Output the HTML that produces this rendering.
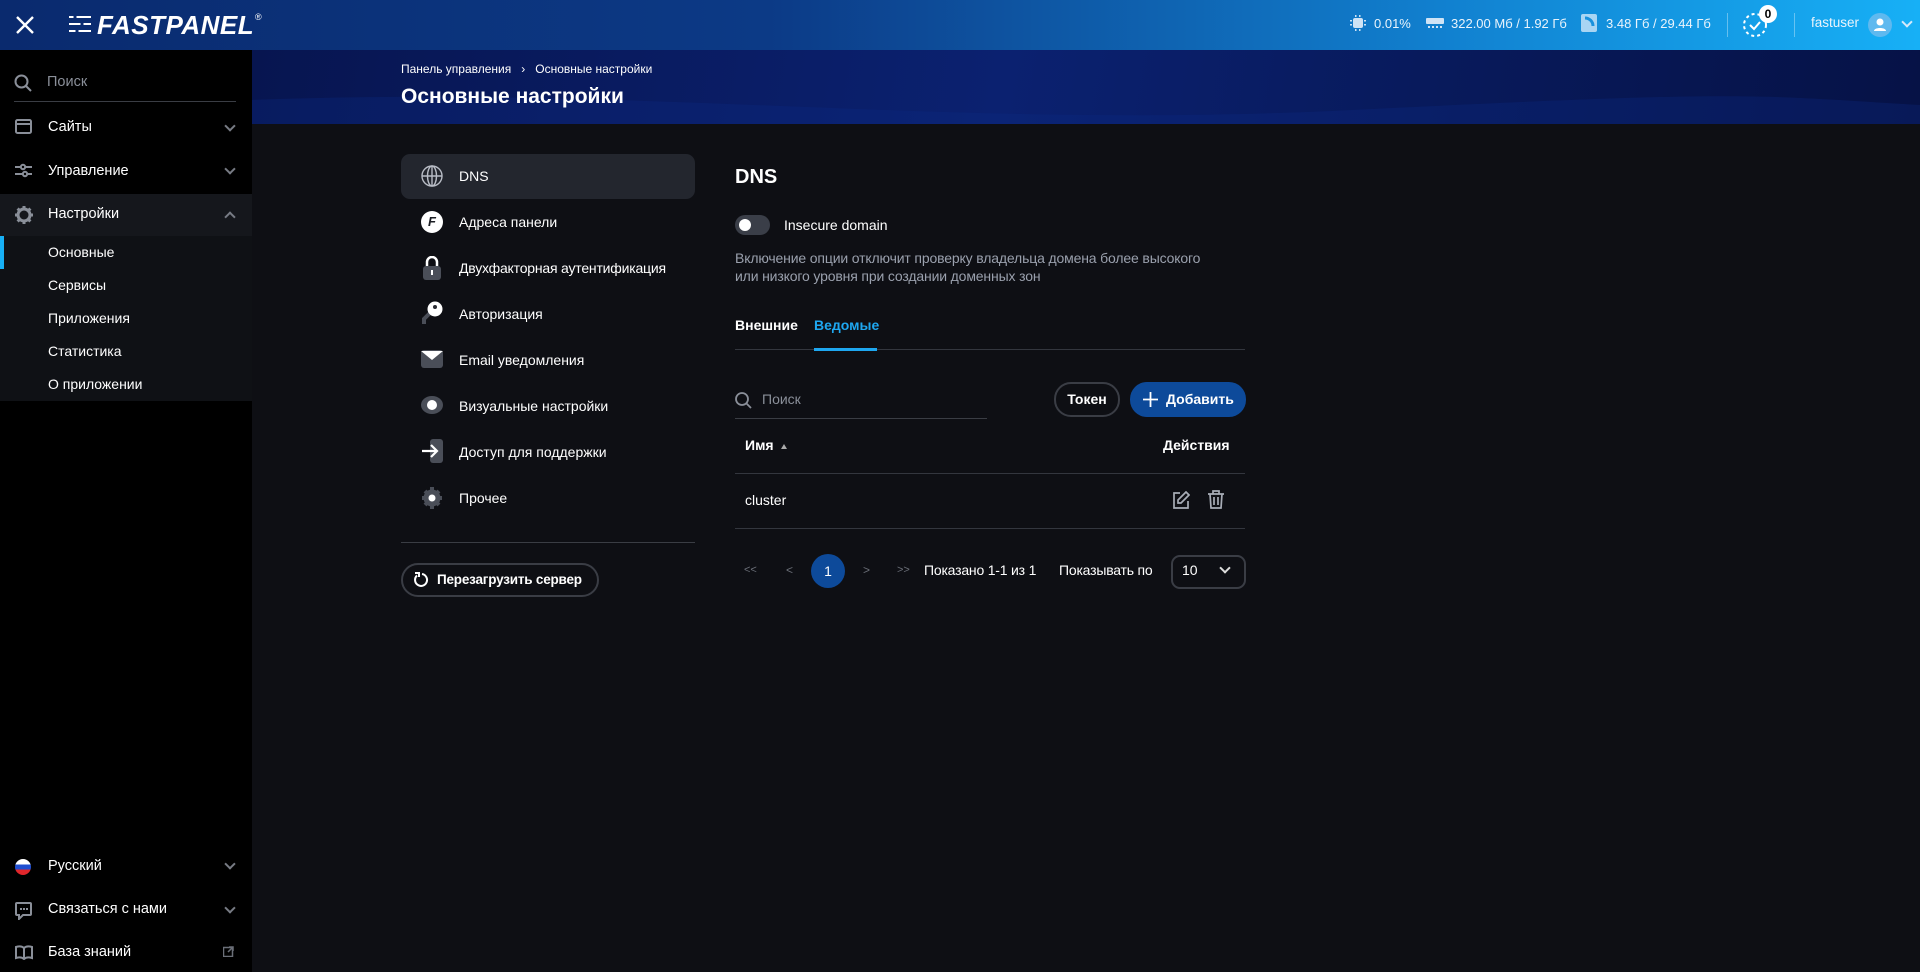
<!DOCTYPE html>
<html><head><meta charset="utf-8">
<style>
*{box-sizing:border-box;margin:0;padding:0}
body{width:1920px;height:972px;overflow:hidden;background:#0e0f14;font-family:"Liberation Sans",sans-serif;color:#fff;font-size:14.5px;position:relative}
.a{position:absolute}
.hdr{left:0;top:0;width:1920px;height:50px;background:linear-gradient(90deg,#0a2a6e 0%,#0c3a86 40%,#1180cf 75%,#17b0f6 100%)}
.ban{left:252px;top:50px;width:1668px;height:74px;background:linear-gradient(100deg,#071550 0%,#0b2170 45%,#081a5c 70%,#061246 100%);overflow:hidden}
.side{left:0;top:50px;width:252px;height:922px;background:#000}
.t{white-space:nowrap}
.muted{color:#8a8f99}
.chev{width:8px;height:8px;border-right:2px solid #777b84;border-bottom:2px solid #777b84;transform:rotate(45deg)}
.chevu{width:8px;height:8px;border-left:2px solid #777b84;border-top:2px solid #777b84;transform:rotate(45deg)}
.m{font-size:14px}
</style></head><body>
<div class="a hdr"></div>
<svg class="a" style="left:15px;top:15px" width="20" height="20" viewBox="0 0 20 20"><path d="M2 2L18 18M18 2L2 18" stroke="#fff" stroke-width="2.4"/></svg>
<svg class="a" style="left:67px;top:14px" width="25" height="20" viewBox="0 0 25 20"><g stroke="#fff" stroke-width="2"><path d="M2 3h22M2 10h22M2 17h22"/></g><g stroke="#0b2c72" stroke-width="3"><path d="M8 1v4M15 8v4M10 15v4"/></g></svg>
<div class="a t" style="left:97px;top:10px;font-size:26px;font-weight:bold;font-style:italic;letter-spacing:0.5px">FASTPANEL</div>
<div class="a t" style="left:255px;top:12px;font-size:9px">®</div>
<svg class="a" style="left:1350px;top:15px" width="16" height="16" viewBox="0 0 16 16"><rect x="3" y="3" width="10" height="10" rx="2" fill="#cfe3f5"/><g fill="#cfe3f5"><rect x="0" y="5" width="2" height="1.5"/><rect x="0" y="9" width="2" height="1.5"/><rect x="14" y="5" width="2" height="1.5"/><rect x="14" y="9" width="2" height="1.5"/><rect x="5" y="0" width="1.5" height="2"/><rect x="9" y="0" width="1.5" height="2"/><rect x="5" y="14" width="1.5" height="2"/><rect x="9" y="14" width="1.5" height="2"/></g></svg>
<div class="a t" style="left:1374px;top:16px;font-size:13px;color:#eaf4fc">0.01%</div>
<svg class="a" style="left:1426px;top:17px" width="18" height="12" viewBox="0 0 18 12"><rect x="0" y="1" width="18" height="6" rx="1" fill="#cfe3f5"/><g fill="#cfe3f5"><rect x="2" y="9" width="2" height="2"/><rect x="6" y="9" width="2" height="2"/><rect x="10" y="9" width="2" height="2"/><rect x="14" y="9" width="2" height="2"/></g></svg>
<div class="a t" style="left:1451px;top:16px;font-size:13px;color:#eaf4fc">322.00 Мб / 1.92 Гб</div>
<svg class="a" style="left:1581px;top:14px" width="16" height="18" viewBox="0 0 16 18"><rect x="0" y="0" width="16" height="18" rx="2" fill="#a9d5f3"/><path d="M4 4a8 8 0 0 1 8 8" stroke="#1991dd" stroke-width="3" fill="none"/></svg>
<div class="a t" style="left:1606px;top:16px;font-size:13px;color:#eaf4fc">3.48 Гб / 29.44 Гб</div>
<div class="a" style="left:1727px;top:13px;width:1px;height:24px;background:rgba(255,255,255,.35)"></div>
<svg class="a" style="left:1742px;top:12px" width="26" height="26" viewBox="0 0 26 26"><circle cx="13" cy="13" r="11" stroke="#fff" stroke-width="2" fill="none" stroke-dasharray="3 3"/><path d="M8 13l4 4 6-7" stroke="#fff" stroke-width="2" fill="none"/></svg>
<div class="a" style="left:1759px;top:5px;width:18px;height:18px;border-radius:50%;background:#fff;color:#000;font-size:12px;font-weight:bold;text-align:center;line-height:18px">0</div>
<div class="a" style="left:1794px;top:13px;width:1px;height:24px;background:rgba(255,255,255,.35)"></div>
<div class="a t" style="left:1811px;top:15px;font-size:13.5px;color:#eaf4fc">fastuser</div>
<div class="a" style="left:1868px;top:13px;width:24px;height:24px;border-radius:50%;background:#5fb9ef"></div>
<svg class="a" style="left:1868px;top:13px" width="24" height="24" viewBox="0 0 24 24"><circle cx="12" cy="9" r="3.5" fill="#fff"/><path d="M6 18c0-4 12-4 12 0z" fill="#fff"/></svg>
<div class="a chev" style="left:1903px;top:18px;border-color:#d5eafa"></div>

<div class="a ban">
<svg width="1668" height="74" style="position:absolute;left:0;top:0"><path d="M0 50 C400 35 700 80 1100 60 S1500 45 1668 55 L1668 74 L0 74Z" fill="#0c2a86" opacity=".3"/></svg>
</div>
<div class="a t" style="left:401px;top:62px;font-size:12px">Панель управления &nbsp;&nbsp;›&nbsp;&nbsp; Основные настройки</div>
<div class="a t" style="left:401px;top:85px;font-size:21px;font-weight:bold">Основные настройки</div>

<div class="a side"></div>
<svg class="a" style="left:14px;top:74px" width="18" height="18" viewBox="0 0 18 18"><circle cx="7.5" cy="7.5" r="6" stroke="#8a8f99" stroke-width="2" fill="none"/><path d="M12 12l5 5" stroke="#8a8f99" stroke-width="2"/></svg>
<div class="a t muted" style="left:47px;top:74px;font-size:14.5px">Поиск</div>
<div class="a" style="left:14px;top:101px;width:222px;height:1px;background:#3a3d44"></div>
<svg class="a" style="left:15px;top:119px" width="17" height="15" viewBox="0 0 17 15"><rect x="1" y="1" width="15" height="13" rx="1.5" stroke="#8a8f99" stroke-width="2" fill="none"/><path d="M1 5h15" stroke="#8a8f99" stroke-width="2"/></svg>
<div class="a t" style="left:48px;top:119px">Сайты</div>
<div class="a chev" style="left:226px;top:122px"></div>
<svg class="a" style="left:15px;top:163px" width="17" height="15" viewBox="0 0 17 15"><g stroke="#8a8f99" stroke-width="2" fill="none"><path d="M0 4h5M11 4h6M0 11h7M13 11h4"/><circle cx="8" cy="4" r="2.2"/><circle cx="10" cy="11" r="2.2"/></g></svg>
<div class="a t" style="left:48px;top:163px">Управление</div>
<div class="a chev" style="left:226px;top:165px"></div>
<div class="a" style="left:0;top:194px;width:252px;height:42px;background:#15171c"></div>
<svg class="a" style="left:14px;top:205px" width="20" height="20" viewBox="0 0 20 20"><circle cx="10" cy="10" r="6" stroke="#8a8f99" stroke-width="3" fill="none"/><g stroke="#8a8f99" stroke-width="3"><path d="M10 1v3M10 16v3M1 10h3M16 10h3M3.6 3.6l2 2M14.4 14.4l2 2M3.6 16.4l2-2M14.4 5.6l2-2"/></g></svg>
<div class="a t" style="left:48px;top:206px">Настройки</div>
<div class="a chevu" style="left:226px;top:213px"></div>
<div class="a" style="left:0;top:236px;width:252px;height:165px;background:#0f1115"></div>
<div class="a" style="left:0;top:236px;width:4px;height:33px;background:#17b0f5"></div>
<div class="a t m" style="left:48px;top:244px">Основные</div>
<div class="a t m" style="left:48px;top:277px">Сервисы</div>
<div class="a t m" style="left:48px;top:310px">Приложения</div>
<div class="a t m" style="left:48px;top:343px">Статистика</div>
<div class="a t m" style="left:48px;top:376px">О приложении</div>

<svg class="a" style="left:15px;top:859px" width="16" height="16" viewBox="0 0 16 16"><clipPath id="c"><circle cx="8" cy="8" r="8"/></clipPath><g clip-path="url(#c)"><rect width="16" height="5.5" fill="#fff"/><rect y="5.5" width="16" height="5" fill="#1f4fd0"/><rect y="10.5" width="16" height="5.5" fill="#e0262b"/></g></svg>
<div class="a t" style="left:48px;top:858px">Русский</div>
<div class="a chev" style="left:226px;top:860px"></div>
<svg class="a" style="left:15px;top:902px" width="17" height="18" viewBox="0 0 17 18"><path d="M2 1h13a1 1 0 0 1 1 1v10a1 1 0 0 1-1 1H8l-4 4v-4H2a1 1 0 0 1-1-1V2a1 1 0 0 1 1-1z" stroke="#8a8f99" stroke-width="2" fill="none"/><g fill="#8a8f99"><rect x="5" y="6" width="2" height="2"/><rect x="8" y="6" width="2" height="2"/><rect x="11" y="6" width="2" height="2"/></g></svg>
<div class="a t" style="left:48px;top:901px">Связаться с нами</div>
<div class="a chev" style="left:226px;top:904px"></div>
<svg class="a" style="left:15px;top:945px" width="18" height="15" viewBox="0 0 18 15"><path d="M9 3C7 1 4 1 1 2v11c3-1 6-1 8 1 2-2 5-2 8-1V2C14 1 11 1 9 3zM9 3v11" stroke="#8a8f99" stroke-width="2" fill="none"/></svg>
<div class="a t" style="left:48px;top:944px">База знаний</div>
<svg class="a" style="left:223px;top:946px" width="11" height="11" viewBox="0 0 11 11"><rect x="0.5" y="1.5" width="9" height="9" fill="none" stroke="#6b6f78" stroke-width="1.5"/><path d="M5 6l5-5M6 1h4v4" stroke="#6b6f78" stroke-width="1.5" fill="none"/></svg>

<div class="a" style="left:401px;top:154px;width:294px;height:45px;background:#23262e;border-radius:9px"></div>
<svg class="a" style="left:421px;top:165px" width="22" height="22" viewBox="0 0 22 22"><g stroke="#b8bcc5" stroke-width="1.4" fill="none"><circle cx="11" cy="11" r="10"/><ellipse cx="11" cy="11" rx="4.5" ry="10"/><path d="M11 1v20M1 11h20"/></g></svg>
<div class="a t m" style="left:459px;top:168px">DNS</div>
<div class="a" style="left:421px;top:211px;width:22px;height:22px;border-radius:50%;background:#fff;color:#1a1c22;font-weight:bold;font-style:italic;font-size:13px;text-align:center;line-height:22px">F</div>
<div class="a t m" style="left:459px;top:214px">Адреса панели</div>
<svg class="a" style="left:421px;top:256px" width="22" height="24" viewBox="0 0 22 24"><path d="M6 11V6a5 5 0 0 1 10 0v5" stroke="#fff" stroke-width="2.5" fill="none"/><rect x="2" y="10" width="18" height="14" rx="3" fill="#4a4e58"/><rect x="10" y="14" width="2" height="5" fill="#fff"/></svg>
<div class="a t m" style="left:459px;top:260px;letter-spacing:-0.2px">Двухфакторная аутентификация</div>
<svg class="a" style="left:421px;top:301px" width="22" height="24" viewBox="0 0 22 24"><path d="M3 23V18l6-6" stroke="#4a4e58" stroke-width="4" fill="none"/><circle cx="14" cy="8" r="7.5" fill="#fff"/><circle cx="14" cy="6" r="2" fill="#2a2c33"/></svg>
<div class="a t m" style="left:459px;top:306px">Авторизация</div>
<svg class="a" style="left:421px;top:348px" width="22" height="20" viewBox="0 0 22 20"><rect x="0" y="2" width="22" height="18" rx="3" fill="#4a4e58"/><path d="M0 3h22l-11 9z" fill="#fff"/></svg>
<div class="a t m" style="left:459px;top:352px">Email уведомления</div>
<svg class="a" style="left:421px;top:395px" width="22" height="20" viewBox="0 0 22 20"><ellipse cx="11" cy="10" rx="11" ry="9" fill="#4a4e58"/><circle cx="11" cy="10" r="5" fill="#fff"/></svg>
<div class="a t m" style="left:459px;top:398px">Визуальные настройки</div>
<svg class="a" style="left:421px;top:439px" width="22" height="24" viewBox="0 0 22 24"><rect x="9" y="0" width="13" height="24" rx="3" fill="#4a4e58"/><path d="M1 12h15M10 6l6 6-6 6" stroke="#fff" stroke-width="2.2" fill="none"/></svg>
<div class="a t m" style="left:459px;top:444px">Доступ для поддержки</div>
<svg class="a" style="left:421px;top:486px" width="22" height="24" viewBox="0 0 22 24"><circle cx="11" cy="12" r="8.5" fill="#4a4e58"/><g stroke="#4a4e58" stroke-width="4"><path d="M11 1v22M1 12h20M4 5l14 14M4 19L18 5"/></g><circle cx="11" cy="12" r="3.5" fill="#fff"/></svg>
<div class="a t m" style="left:459px;top:490px">Прочее</div>
<div class="a" style="left:401px;top:542px;width:294px;height:1px;background:#3a3d44"></div>
<div class="a" style="left:401px;top:563px;width:198px;height:34px;border:2px solid #3a3d45;border-radius:17px"></div>
<svg class="a" style="left:413px;top:572px" width="16" height="16" viewBox="0 0 16 16"><path d="M4 3.5A6 6 0 1 0 9 2" stroke="#fff" stroke-width="2" fill="none"/><path d="M2 1h4v4" stroke="#fff" stroke-width="2" fill="none"/></svg>
<div class="a t" style="left:437px;top:572px;font-size:13.5px;font-weight:bold;letter-spacing:-0.2px">Перезагрузить сервер</div>

<div class="a t" style="left:735px;top:166px;font-size:20px;font-weight:bold">DNS</div>
<div class="a" style="left:735px;top:215px;width:35px;height:20px;border-radius:10px;background:#3a3e48"></div>
<div class="a" style="left:739px;top:219px;width:12px;height:12px;border-radius:50%;background:#fff"></div>
<div class="a t m" style="left:784px;top:217px">Insecure domain</div>
<div class="a t" style="left:735px;top:249px;font-size:14px;color:#9aa0ad;line-height:18px;letter-spacing:-0.15px">Включение опции отключит проверку владельца домена более высокого<br>или низкого уровня при создании доменных зон</div>
<div class="a t" style="left:735px;top:317px;font-size:14px;font-weight:bold">Внешние</div>
<div class="a t" style="left:814px;top:317px;font-size:14px;font-weight:bold;color:#1ea7f0">Ведомые</div>
<div class="a" style="left:735px;top:349px;width:510px;height:1px;background:#33363e"></div>
<div class="a" style="left:814px;top:348px;width:63px;height:3px;background:#1ea7f0"></div>
<svg class="a" style="left:735px;top:392px" width="17" height="17" viewBox="0 0 17 17"><circle cx="7" cy="7" r="6" stroke="#8a8f99" stroke-width="1.8" fill="none"/><path d="M11.5 11.5l4.5 4.5" stroke="#8a8f99" stroke-width="1.8"/></svg>
<div class="a t muted" style="left:762px;top:391px;font-size:14px">Поиск</div>
<div class="a" style="left:735px;top:418px;width:252px;height:1px;background:#3a3d44"></div>
<div class="a" style="left:1054px;top:382px;width:66px;height:35px;border:2px solid #3a3d45;border-radius:17px;text-align:center;line-height:31px;font-size:14px;font-weight:bold">Токен</div>
<div class="a" style="left:1130px;top:382px;width:116px;height:35px;background:#0d4a9a;border-radius:17px"></div>
<svg class="a" style="left:1143px;top:392px" width="15" height="15" viewBox="0 0 15 15"><path d="M7.5 0v15M0 7.5h15" stroke="#fff" stroke-width="1.8"/></svg>
<div class="a t" style="left:1166px;top:391px;font-size:14px;font-weight:bold">Добавить</div>
<div class="a t" style="left:745px;top:437px;font-size:14px;font-weight:bold">Имя</div>
<div class="a" style="left:781px;top:444px;width:0;height:0;border-left:3.5px solid transparent;border-right:3.5px solid transparent;border-bottom:5px solid #aaa"></div>
<div class="a t" style="left:1163px;top:437px;font-size:14px;font-weight:bold">Действия</div>
<div class="a" style="left:735px;top:473px;width:510px;height:1px;background:#33363e"></div>
<div class="a t m" style="left:745px;top:492px">cluster</div>
<svg class="a" style="left:1172px;top:491px" width="18" height="18" viewBox="0 0 18 18"><path d="M8 2H2v15h14v-7" stroke="#a8adb7" stroke-width="1.7" fill="none"/><path d="M14 1l3 3-8 8H6V9z" stroke="#a8adb7" stroke-width="1.7" fill="none"/></svg>
<svg class="a" style="left:1208px;top:490px" width="16" height="19" viewBox="0 0 16 19"><path d="M0 4h16M5 4V1h6v3M2 4l1 14h10l1-14M6 7v8M10 7v8" stroke="#a8adb7" stroke-width="1.7" fill="none"/></svg>
<div class="a" style="left:735px;top:528px;width:510px;height:1px;background:#33363e"></div>
<div class="a t" style="left:744px;top:564px;font-size:11px;color:#6b6f78">&lt;&lt;</div>
<div class="a t" style="left:786px;top:563px;font-size:12px;color:#6b6f78">&lt;</div>
<div class="a" style="left:811px;top:554px;width:34px;height:34px;border-radius:50%;background:#0d4a9a;text-align:center;line-height:34px;font-size:14px">1</div>
<div class="a t" style="left:863px;top:563px;font-size:12px;color:#6b6f78">&gt;</div>
<div class="a t" style="left:897px;top:564px;font-size:11px;color:#6b6f78">&gt;&gt;</div>
<div class="a t" style="left:924px;top:562px;font-size:14px;letter-spacing:-0.2px">Показано 1-1 из 1</div>
<div class="a t" style="left:1059px;top:562px;font-size:14px;letter-spacing:-0.2px">Показывать по</div>
<div class="a" style="left:1171px;top:555px;width:75px;height:34px;border:2px solid #3a3d45;border-radius:9px"></div>
<div class="a t m" style="left:1182px;top:562px">10</div>
<div class="a chev" style="left:1221px;top:564px;border-color:#ddd"></div>
</body></html>
